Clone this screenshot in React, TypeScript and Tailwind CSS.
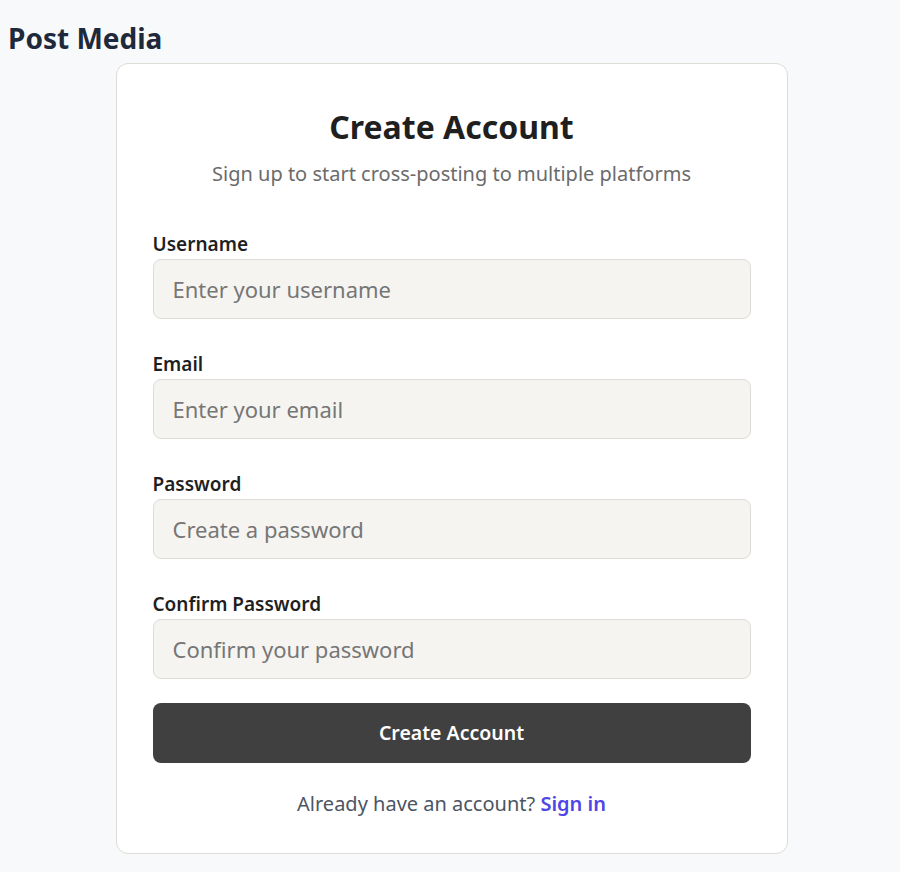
import React from "react";

const font = { fontFamily: '"Noto Sans", "Open Sans", sans-serif' };

function Field({ label, placeholder, type = "text" }: { label: string; placeholder: string; type?: string }) {
  return (
    <div className="flex flex-col">
      <label className="text-[19px] font-semibold text-[#1f1f1f] leading-[24px] mb-[3px]">{label}</label>
      <input
        type={type}
        placeholder={placeholder}
        className="h-[60px] w-full rounded-[8px] border border-[#dedcd6] bg-[#f5f4f1] px-[19px] text-[22px] text-[#333] placeholder:text-[#767676] outline-none"
      />
    </div>
  );
}

export default function App() {
  return (
    <div className="min-h-screen bg-[#f8f9fa]" style={font}>
      <h1 className="px-2 pt-[18px] text-[28px] font-bold leading-[40px] text-[#1e293b]">Post Media</h1>
      <div className="flex justify-center pl-[3px] mt-[5px]">
        <div className="w-[672px] rounded-[12px] border border-[#dedcd6] bg-white px-[36px] pt-[41px] pb-[35px]">
          <h2 className="text-center text-[32px] font-bold leading-[44px] text-[#1f1f1f]">Create Account</h2>
          <p className="mt-[11px] text-center text-[20px] leading-[28px] text-[#6b6b6b]">Sign up to start cross-posting to multiple platforms</p>
          <div className="mt-[44px] flex flex-col gap-[33px]">
            <Field label="Username" placeholder="Enter your username" />
            <Field label="Email" placeholder="Enter your email" type="email" />
            <Field label="Password" placeholder="Create a password" type="password" />
            <Field label="Confirm Password" placeholder="Confirm your password" type="password" />
          </div>
          <button className="mt-[24px] h-[60px] w-full rounded-[8px] bg-[#404040] text-[19.5px] font-semibold text-white">
            Create Account
          </button>
          <p className="mt-[27px] text-center text-[20px] leading-[28px] text-[#4b5563]">
            Already have an account? <a className="font-semibold text-[#4f46e5]">Sign in</a>
          </p>
        </div>
      </div>
    </div>
  );
}
